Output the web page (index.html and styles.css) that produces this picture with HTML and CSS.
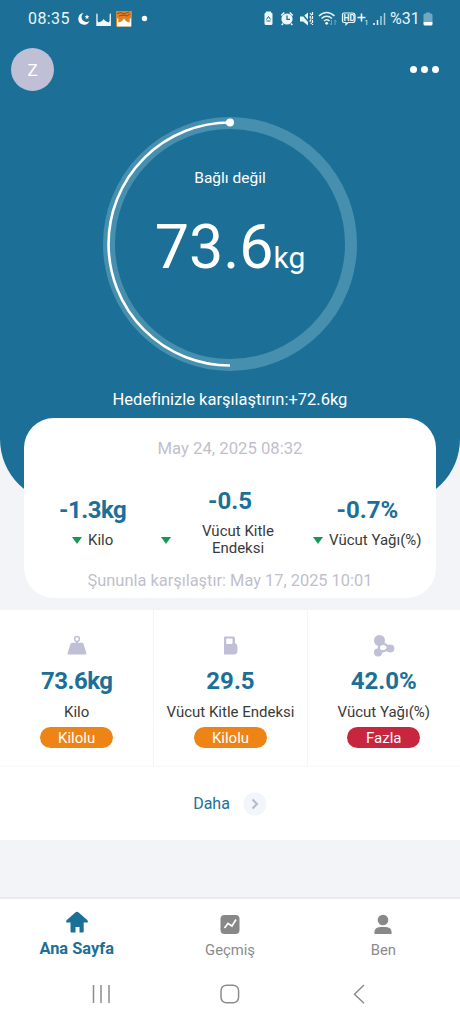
FILE: index.html
```html
<!DOCTYPE html>
<html lang="tr">
<head>
    <meta charset="UTF-8">
    <meta name="viewport" content="width=device-width, initial-scale=1.0">
    <title>Ana Sayfa</title>
    <link rel="stylesheet" href="styles.css">
</head>
<body>

<div class="app">
    <section class="hero">
        <div class="status-bar">
            <span class="clock">08:35</span>
            <svg class="status-left" width="75" height="20" viewBox="0 0 75 20">
                <path d="M7.500 4A5.800 5.800 0 1 0 13.500 12 4.600 4.600 0 0 1 7.500 4z" fill="#fff"/>
                <path d="M11 5.500l.7 1.500 1.600.2-1.200 1.100.3 1.700-1.400-.8-1.400.8.300-1.700-1.200-1.100 1.600-.2z" fill="#fff"/>
                <path d="M20.300 17V5.500l.6-1.500.7 1.500V12l1 1.500q3.500-.5 5-3.500 1.500 3 5 3.500l1-1.500V5.500l.6-1.500.7 1.500V17z" fill="#f2f8fc"/>
                <rect x="40" y="2" width="16" height="15.500" fill="#dc8228"/>
                <path d="M41 4.500l4-1 3 1.500 5-2M43 7l4-1 4 1 3-2" stroke="#9b4b13" fill="none"/>
                <path d="M41 17.500V10l.6-1 .7 1v3.500q4-.5 5.700-4 1.700 3.500 5.700 4V10l.7-1 .6 1v7.500z" fill="#fff"/>
                <circle cx="68.500" cy="9.500" r="2.700" fill="#fff"/>
            </svg>
            <svg class="status-right" width="126" height="20" viewBox="0 0 126 20">
                <!-- battery saver -->
                <path d="M1.500 5q0-1.500 1.500-1.500V2.500h5v1q1.500 0 1.500 1.500v9.500q0 1.500-1.500 1.500H3q-1.500 0-1.500-1.500z" fill="#eef7fb"/>
                <path d="M3.500 10.500L5.500 7.500l2 3M3.500 12h4" stroke="#1c7097" fill="none"/>
                <!-- alarm -->
                <circle cx="24" cy="10" r="5.600" fill="#eef7fb"/>
                <path d="M18.300 6.500l3-3M29.700 6.500l-3-3M20 14.500l-1.300 1.500M28 14.500l1.300 1.500" stroke="#eef7fb" stroke-width="1.600"/>
                <path d="M24 6.500V10.300h3" stroke="#1c7097" stroke-width="1.300" fill="none"/>
                <!-- mute -->
                <path d="M37 7.500h3l5-4v13l-5-4h-3z" fill="#eef7fb"/>
                <path d="M37.500 3l11 13" stroke="#1c7097" stroke-width="1.500"/>
                <path d="M47 4l1.500 2-1.500 2 1.500 2-1.500 2 1.500 3M49.500 3v13" stroke="#eef7fb" stroke-width="1.200" fill="none" stroke-dasharray="3 1"/>
                <!-- wifi -->
                <path d="M56 7q7.500-7 15.500 0M58.500 9.500q5-4.500 10.500 0M61 12q2.700-2.500 5.500 0" stroke="#e3f1f7" stroke-width="1.600" fill="none"/>
                <circle cx="63.700" cy="14.300" r="1.400" fill="#fff"/>
                <path d="M68.500 11v5l-1.500-1.500M72 16v-5l1.500 1.500" stroke="#6ba5bf" fill="none"/>
                <!-- network -->
                <path d="M81 4h8.500q2.500 0 2.500 2.500v4.500q0 2.500-2.500 2.500H85l-2 2v-2h-2q-1.500 0-1.500-1.500V5.500q0-1.500 1.500-1.500z" stroke="#eef7fb" stroke-width="1.200" fill="none"/>
                <text class="network-text" x="80.500" y="12">HD</text>
                <path d="M94.500 8.500h8M98.500 4.500v8" stroke="#eef7fb" stroke-width="1.600"/>
                <text class="network-sim" x="101.500" y="15.500">1</text>
                <path d="M111 16v-2M114.500 16v-5" stroke="#eef7fb" stroke-width="1.500"/>
                <path d="M118 16V7M121.500 16V4" stroke="#a7ccdc" stroke-width="1.500"/>
            </svg>
            <span class="percent">%31</span>
            <svg class="battery" width="10" height="14" viewBox="0 0 10 14">
                <path d="M.5 3q0-1.500 1.500-1.500h1V.5h4v1h1q1.500 0 1.500 1.500v7h-9z" fill="#70a8c1"/>
                <path d="M.5 10h9v2q0 1.500-1.500 1.500H2Q.5 13.500.5 12z" fill="#fff"/>
            </svg>
        </div>

        <div class="top-bar">
            <div class="avatar">Z</div>
            <div class="more"><i></i><i></i><i></i></div>
        </div>

        <div class="gauge">
            <svg class="ring" width="256" height="256" viewBox="0 0 256 256">
                <circle cx="128" cy="128" r="121" fill="none" stroke="#468fae" stroke-width="12"/>
                <path d="M128 249.500a121.500 121.500 0 0 1 0-243" fill="none" stroke="#fff" stroke-width="2.600"/>
                <circle cx="128" cy="6.500" r="4" fill="#fff"/>
            </svg>
            <span class="device">Bağlı değil</span>
            <span class="weight">73.6<small>kg</small></span>
        </div>

        <p class="goal">Hedefinizle karşılaştırın:+72.6kg</p>
    </section>

    <section class="compare">
        <p class="compare-date">May 24, 2025 08:32</p>
        <div class="changes">
            <div class="change">
                <strong class="tight">-1.3kg</strong>
                <div class="change-label"><i class="down"></i><span>Kilo</span></div>
            </div>
            <div class="change">
                <strong>-0.5</strong>
                <div class="change-label wide"><i class="down"></i><span>Vücut Kitle Endeksi</span></div>
            </div>
            <div class="change">
                <strong>-0.7%</strong>
                <div class="change-label"><i class="down"></i><span>Vücut Yağı(%)</span></div>
            </div>
        </div>
        <p class="compare-with">Şununla karşılaştır: May 17, 2025 10:01</p>
    </section>

    <section class="metrics">
        <div class="metric-row">
            <div class="metric">
                <svg width="22" height="22" viewBox="0 0 22 22">
                    <circle cx="11" cy="4" r="2.400" fill="none" stroke="#bfc0d6" stroke-width="1.500"/>
                    <path d="M10 6h2v2h-2z" fill="#bfc0d6"/>
                    <path d="M4.500 9q.3-1.300 1.500-1.300h10q1.200 0 1.500 1.300L20.500 18.500q.2 1-1 1h-17q-1.200 0-1-1z" fill="#bfc0d6"/>
                </svg>
                <strong class="tight">73.6kg</strong>
                <span>Kilo</span>
                <em class="tag">Kilolu</em>
            </div>
            <div class="metric">
                <svg width="22" height="22" viewBox="0 0 22 22">
                    <path d="M6 1.500h8q2 0 2 2V8q2.500 1 2.500 4v3.500q0 4-4 4H5v-17q0-1 1-1z" fill="#bfc0d6"/>
                    <rect x="7.200" y="3.500" width="6.300" height="5.500" rx="1" fill="#fff"/>
                </svg>
                <strong>29.5</strong>
                <span>Vücut Kitle Endeksi</span>
                <em class="tag">Kilolu</em>
            </div>
            <div class="metric">
                <svg width="22" height="22" viewBox="0 0 22 22">
                    <path d="M6.500 6L5.500 17.500l13-4z" fill="none" stroke="#bfc0d6" stroke-width="2.500"/>
                    <circle cx="6.500" cy="5.500" r="5.500" fill="#bfc0d6"/>
                    <circle cx="5" cy="17.500" r="4" fill="#bfc0d6"/>
                    <circle cx="17.300" cy="13.500" r="4" fill="#bfc0d6"/>
                    <circle cx="10" cy="12.500" r="2.600" fill="#fff"/>
                </svg>
                <strong>42.0%</strong>
                <span>Vücut Yağı(%)</span>
                <em class="tag red">Fazla</em>
            </div>
        </div>
        <a class="details">Daha
            <svg width="24" height="24" viewBox="0 0 24 24">
                <circle cx="12" cy="12" r="11.500" fill="#f2f5f9"/>
                <path d="M9.500 7.500L14 12l-4.500 4.500" fill="none" stroke="#b4bac8" stroke-width="2"/>
            </svg>
        </a>
    </section>

    <nav class="tabs">
        <a class="tab active">
            <svg width="24" height="24" viewBox="0 0 24 24">
                <path d="M10.300 2.500q1.700-1.300 3.400 0l8.500 7.500q1.200 1.200.5 2.500H18.700v9q0 1-1 1h-3.200V17h-4v5.500H6.500q-1 0-1-1v-9H1.300q-.7-1.300.5-2.500z" fill="#1c7097"/>
            </svg>
            <span>Ana Sayfa</span>
        </a>
        <a class="tab">
            <svg width="24" height="24" viewBox="0 0 24 24">
                <rect x="2.500" y="5" width="19" height="19" rx="4" fill="#888"/>
                <path d="M6.500 18l3.500-4.500 4 2.500 4-6.500" fill="none" stroke="#fff" stroke-width="1.700"/>
            </svg>
            <span>Geçmiş</span>
        </a>
        <a class="tab">
            <svg width="24" height="24" viewBox="0 0 24 24">
                <circle cx="12" cy="10" r="5.300" fill="#888"/>
                <path d="M3.300 23q0-6 6-6h5.400q6 0 6 6 0 1-1 1H4.300q-1 0-1-1z" fill="#888"/>
            </svg>
            <span>Ben</span>
        </a>
    </nav>

    <div class="system-nav">
        <svg width="20" height="20" viewBox="0 0 20 20"><path d="M2.500 1v18M10 1v18M18 1v18" stroke="#8c8c8c" stroke-width="1.500"/></svg>
        <svg width="20" height="20" viewBox="0 0 20 20"><rect x="1" y="1.200" width="17.600" height="17.600" rx="5.500" fill="none" stroke="#8c8c8c" stroke-width="1.500"/></svg>
        <svg width="20" height="20" viewBox="0 0 20 20"><path d="M15 1L5.500 10.200l9.500 9" fill="none" stroke="#8c8c8c" stroke-width="1.500"/></svg>
    </div>
</div>

</body>
</html>
```

FILE: styles.css
```css
body {
    margin: 0;
    background: #f2f4f8;
    font-family: Roboto, sans-serif;
    color: #3a3a3a;
}

p {
    margin: 0;
}

svg {
    display: block;
    flex: none;
}

.app {
    width: 460px;
    height: 1024px;
    display: flex;
    flex-direction: column;
    overflow: hidden;
}

.hero {
    height: 503px;
    flex: none;
    background: #1c7097;
    border-radius: 0 0 64px 64px;
    color: #fff;
    display: flex;
    flex-direction: column;
    align-items: center;
}

.status-bar {
    width: 100%;
    height: 37px;
    box-sizing: border-box;
    padding: 0 28px;
    display: flex;
    align-items: center;
    font-size: 16px;
    color: #eaf6fb;
}

.clock {
    width: 48px;
    letter-spacing: 0.4px;
}

.status-right {
    margin-left: auto;
}

.network-text {
    font-size: 8.500px;
    font-weight: bold;
    fill: #eef7fb;
}

.network-sim {
    font-size: 7px;
    fill: #eef7fb;
}

.percent {
    margin-left: 1px;
    width: 33px;
}

.battery {
    margin-right: -1px;
}

.top-bar {
    width: 100%;
    height: 65px;
    box-sizing: border-box;
    padding: 0 21px 0 11px;
    display: flex;
    align-items: center;
    justify-content: space-between;
}

.avatar {
    width: 43px;
    height: 43px;
    border-radius: 50%;
    background: #bfc0d6;
    font-size: 17px;
    line-height: 44px;
    text-align: center;
}

.more {
    display: flex;
    gap: 4px;
}

.more i {
    width: 7px;
    height: 7px;
    border-radius: 50%;
    background: #fff;
}

.gauge {
    position: relative;
    width: 256px;
    height: 256px;
    margin-top: 14px;
    display: flex;
    flex-direction: column;
    align-items: center;
}

/* the ring lies behind the reading */
.ring {
    position: absolute;
    top: 0;
    left: 0;
}

.device {
    margin-top: 52px;
    font-size: 15.500px;
    line-height: 20px;
}

.weight {
    margin-top: 23px;
    font-size: 61px;
    line-height: 72px;
}

.weight small {
    font-size: 30px;
}

.goal {
    margin-top: 17px;
    font-size: 16.500px;
    line-height: 22px;
}

.compare {
    position: relative;
    height: 180px;
    flex: none;
    margin: -85px 24px 0;
    border-radius: 30px;
    background: #fff;
    text-align: center;
}

.compare-date,
.compare-with {
    font-size: 16.400px;
    line-height: 20px;
    color: #bfc0cc;
}

.compare-date {
    padding-top: 21px;
    font-size: 16.700px;
}

.changes {
    height: 98px;
    padding-top: 14px;
    display: grid;
    grid-template-columns: repeat(3, 1fr);
    align-items: center;
}

.change strong,
.metric strong {
    display: block;
    font-size: 24px;
    line-height: 28px;
    color: #1c7097;
}

.change strong.tight,
.metric strong.tight {
    letter-spacing: -0.5px;
}

.change-label {
    margin-top: 8px;
    display: flex;
    align-items: center;
    justify-content: center;
    gap: 6px;
    font-size: 15px;
    line-height: 17px;
}

.change-label.wide span {
    flex: 1;
    padding: 0 12px;
}

.down {
    border: 5px solid transparent;
    border-top: 7px solid #159957;
    border-bottom: 0;
}

.metrics {
    margin-top: 12px;
    height: 230px;
    flex: none;
    background: #fff;
}

.metric-row {
    height: 157px;
    display: grid;
    grid-template-columns: repeat(3, 1fr);
}

.metric {
    display: flex;
    flex-direction: column;
    align-items: center;
    padding-top: 25px;
    font-size: 15px;
    border-bottom: 1px solid #f9f9fa;
}

.metric + .metric {
    border-left: 1px solid #f5f5f7;
}

.metric strong {
    margin-top: 10px;
}

.metric span {
    margin-top: 8px;
    line-height: 18px;
}

.tag {
    width: 73px;
    height: 21px;
    margin-top: 6px;
    border-radius: 11px;
    background: #ee8416;
    color: #fff;
    font-style: normal;
    line-height: 22px;
    text-align: center;
}

.tag.red {
    background: #c8253f;
}

.details {
    height: 73px;
    display: flex;
    align-items: center;
    justify-content: center;
    gap: 13px;
    font-size: 16px;
    color: #1c7097;
}

.tabs {
    margin-top: 57px;
    height: 70px;
    flex: none;
    border-top: 2px solid #e9eaed;
    background: #fff;
    display: grid;
    grid-template-columns: repeat(3, 1fr);
}

.tab {
    display: flex;
    flex-direction: column;
    align-items: center;
    padding-top: 11px;
    font-size: 14.800px;
    line-height: 18px;
    color: #8b8b8b;
}

.tab span {
    margin-top: 7px;
}

.tab.active {
    color: #1c7097;
    font-size: 16.400px;
    font-weight: bold;
}

.tab.active span {
    margin-top: 6px;
}

.system-nav {
    flex: 1;
    padding: 15px 91px 0;
    background: #fff;
    display: flex;
    justify-content: space-between;
}
```
